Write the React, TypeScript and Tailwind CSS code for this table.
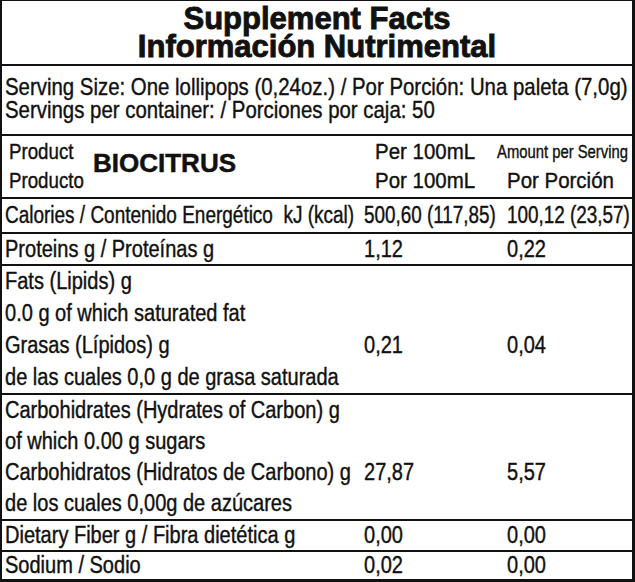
import React from "react";

function T({ children, className = "" }: { children: React.ReactNode; className?: string }) {
  return <span className={`inline-block whitespace-pre origin-left ${className}`}>{children}</span>;
}

const L = "text-[23px] scale-x-[0.87]";

function Row({ label, a, b, h, last, ls = L, as = L, bs = L }: { label: string; a?: string; b?: string; h: string; last?: boolean; ls?: string; as?: string; bs?: string }) {
  return (
    <div className={`grid grid-cols-[362px_143px_1fr] items-center ${h} ${last ? "" : "border-b-2 border-[#111]"}`}>
      <div className="pl-[3px]"><T className={ls}>{label}</T></div>
      <div>{a && <T className={as}>{a}</T>}</div>
      <div>{b && <T className={bs}>{b}</T>}</div>
    </div>
  );
}

function Block({ lines, a, b, h }: { lines: string[]; a: string; b: string; h: string }) {
  return (
    <div className={`${h} border-b-2 border-[#111] grid grid-cols-[362px_143px_1fr] grid-rows-4 items-center`}>
      {lines.map((l, i) => (
        <React.Fragment key={i}>
          <div className="pl-[3px]"><T className={L}>{l}</T></div>
          <div>{i === 2 && <T className={L}>{a}</T>}</div>
          <div>{i === 2 && <T className={L}>{b}</T>}</div>
        </React.Fragment>
      ))}
    </div>
  );
}

export default function App() {
  return (
    <div className="w-[635px] h-[582px] overflow-hidden bg-white text-[#111] font-['Liberation_Sans',Arial,sans-serif] [-webkit-text-stroke:0.4px_#111] flex flex-col border-l-2 border-t border-r-[3px] border-b-[3px] border-[#111] leading-none">
      <div className="h-[65px] shrink-0 border-b-2 border-[#111] flex flex-col items-center justify-center font-bold text-[31px] leading-[28px] [-webkit-text-stroke:0.9px_#111]">
        <div>Supplement Facts</div>
        <div>Información Nutrimental</div>
      </div>
      <div className="h-[70px] shrink-0 border-b-2 border-[#111] flex flex-col justify-center pl-[3px] leading-[20px]">
        <div><T className="text-[24px] scale-x-[0.85]">Serving Size: One lollipops (0,24oz.) / Por Porción: Una paleta (7,0g)</T></div>
        <div><T className="text-[24px] scale-x-[0.85]">Servings per container: / Porciones por caja: 50</T></div>
      </div>
      <div className="h-[63px] shrink-0 border-b-2 border-[#111] grid grid-cols-[362px_143px_1fr] items-center">
        <div className="pl-[7px] flex items-center">
          <div className="w-[84px] shrink-0 flex flex-col gap-[5px] leading-[24px]">
            <T className="text-[22px] scale-x-[0.85]">Product</T>
            <T className="text-[22px] scale-x-[0.85]">Producto</T>
          </div>
          <span className="font-bold text-[26px] mb-[8px] [-webkit-text-stroke:0.5px_#111]">BIOCITRUS</span>
        </div>
        <div className="flex flex-col gap-[5px] leading-[24px] pl-[11px]">
          <T className="text-[22px] scale-x-[0.93]">Per 100mL</T>
          <T className="text-[22px] scale-x-[0.93]">Por 100mL</T>
        </div>
        <div className="flex flex-col gap-[5px] leading-[24px]">
          <T className="text-[19px] scale-x-[0.78] -ml-[10px]">Amount per Serving</T>
          <T className="text-[22px] scale-x-[0.93]">Por Porción</T>
        </div>
      </div>
      <Row
        h="h-[35px] shrink-0"
        label="Calories / Contenido Energético  kJ (kcal)"
        ls="text-[23px] scale-x-[0.825]"
        a="500,60 (117,85)"
        as="text-[23px] scale-x-[0.82]"
        b="100,12 (23,57)"
        bs="text-[23px] scale-x-[0.82]"
      />
      <Row h="h-[32px] shrink-0" label="Proteins g / Proteínas g" a="1,12" b="0,22" />
      <Block
        h="h-[129px] shrink-0"
        lines={["Fats (Lipids) g", "0.0 g of which saturated fat", "Grasas (Lípidos) g", "de las cuales 0,0 g de grasa saturada"]}
        a="0,21"
        b="0,04"
      />
      <Block
        h="h-[126px] shrink-0"
        lines={["Carbohidrates (Hydrates of Carbon) g", "of which 0.00 g sugars", "Carbohidratos (Hidratos de Carbono) g", "de los cuales 0,00g de azúcares"]}
        a="27,87"
        b="5,57"
      />
      <Row h="h-[31px] shrink-0" label="Dietary Fiber g / Fibra dietética g" a="0,00" b="0,00" />
      <Row h="flex-1" label="Sodium / Sodio" a="0,02" b="0,00" last />
    </div>
  );
}
